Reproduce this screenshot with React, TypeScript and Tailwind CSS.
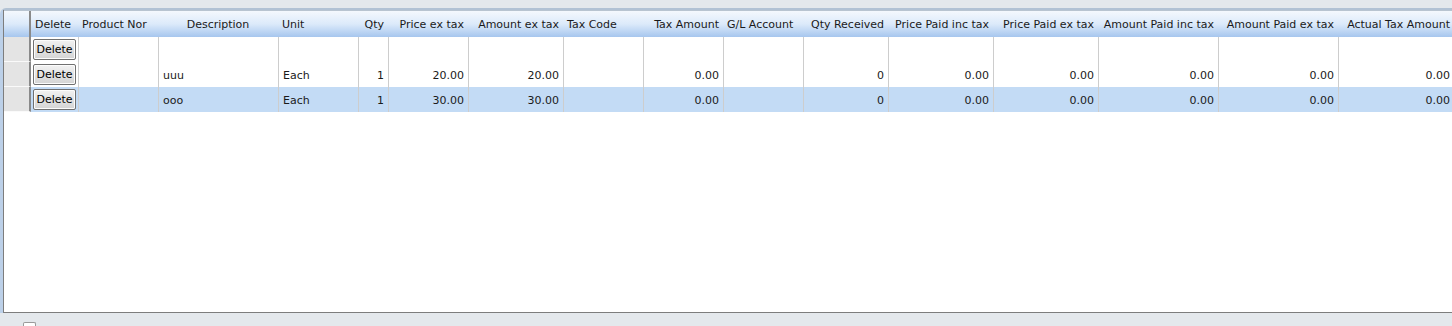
const cols = [
  { label: 'Delete', w: 47, align: 'left' },
  { label: 'Product Nor', w: 80, align: 'left' },
  { label: 'Description', w: 120, align: 'center' },
  { label: 'Unit', w: 80, align: 'left' },
  { label: 'Qty', w: 30, align: 'right' },
  { label: 'Price ex tax', w: 80, align: 'right' },
  { label: 'Amount ex tax', w: 95, align: 'right' },
  { label: 'Tax Code', w: 80, align: 'left' },
  { label: 'Tax Amount', w: 80, align: 'right' },
  { label: 'G/L Account', w: 80, align: 'left' },
  { label: 'Qty Received', w: 85, align: 'right' },
  { label: 'Price Paid inc tax', w: 105, align: 'right' },
  { label: 'Price Paid ex tax', w: 105, align: 'right' },
  { label: 'Amount Paid inc tax', w: 120, align: 'right' },
  { label: 'Amount Paid ex tax', w: 120, align: 'right' },
  { label: 'Actual Tax Amount', w: 116, align: 'right' },
]

// cells after the Delete column
const rows: { cells: string[]; selected?: boolean }[] = [
  { cells: ['', '', '', '', '', '', '', '', '', '', '', '', '', '', ''] },
  { cells: ['', 'uuu', 'Each', '1', '20.00', '20.00', '', '0.00', '', '0', '0.00', '0.00', '0.00', '0.00', '0.00'] },
  { cells: ['', 'ooo', 'Each', '1', '30.00', '30.00', '', '0.00', '', '0', '0.00', '0.00', '0.00', '0.00', '0.00'], selected: true },
]

const dataAlign = ['left', 'left', 'left', 'right', 'right', 'right', 'left', 'right', 'left', 'right', 'right', 'right', 'right', 'right', 'right']

function DeleteButton() {
  return (
    <button className="h-[21px] w-[43px] rounded-[2px] border border-[#707070] bg-gradient-to-b from-[#f2f2f2] to-[#d4d4d4] text-[11px] leading-none text-black shadow-[inset_0_0_0_1px_#fcfcfc]">
      Delete
    </button>
  )
}

export default function App() {
  return (
    <div
      className="w-[1452px] h-[326px] overflow-hidden bg-[#e4e8ec] pt-[8px] text-[11px] text-[#1a1a1a]"
      style={{ fontFamily: 'Tahoma, "DejaVu Sans", sans-serif' }}
    >
      <div className="h-[305px] rounded-tl-[6px] border-t-2 border-l-[3px] border-t-[#b2c2d4] border-l-[#bcd0e8] bg-white">
        <div className="h-full border-l border-b border-[#7d7d7d] overflow-hidden">
          {/* header */}
          <div className="flex h-[27px] border-t border-[#b8c4d0] bg-gradient-to-b from-[#f4f8fd] via-[#dceafa] to-[#a6c6ee]">
            <div className="w-[27px] shrink-0 border-r-2 border-double border-[#8a8a8a]" />
            {cols.map((c, i) => (
              <div
                key={i}
                className={`shrink-0 whitespace-nowrap overflow-hidden px-[4px] pt-[6px] ${
                  c.align === 'right' ? 'text-right' : c.align === 'center' ? 'text-center' : 'text-left'
                }`}
                style={{ width: c.w }}
              >
                {c.label}
              </div>
            ))}
          </div>
          {/* rows */}
          {rows.map((r, ri) => (
            <div key={ri} className={`flex h-[25px] ${r.selected ? 'bg-[#c3dbf5]' : 'bg-white'}`}>
              <div className="w-[27px] shrink-0 border-r-2 border-b border-[#8a8a8a] border-b-[#fafafa] bg-[#e4e4e4]" />
              <div className="w-[47px] shrink-0 flex items-center pl-[2px]">
                <DeleteButton />
              </div>
              {r.cells.map((v, ci) => (
                <div
                  key={ci}
                  className={`shrink-0 whitespace-nowrap overflow-hidden border-l border-[#cdcdcd] px-[4px] pt-[6px] ${
                    dataAlign[ci] === 'right' ? 'text-right' : 'text-left'
                  }`}
                  style={{ width: cols[ci + 1].w }}
                >
                  {v}
                </div>
              ))}
            </div>
          ))}
        </div>
      </div>
      <div className="flex h-[13px] items-end pl-[23px]">
        <div className="h-[4px] w-[13px] rounded-t-[2px] border border-b-0 border-[#9a9a9a] bg-white" />
      </div>
    </div>
  )
}
